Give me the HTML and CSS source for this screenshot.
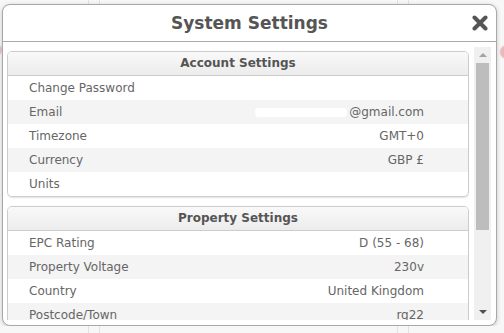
FILE: index.html
```html
<!DOCTYPE html>
<html>
<head>
    <meta charset="UTF-8">
    <title>System Settings</title>
    <link rel="stylesheet" href="styles.css">
</head>
<body>
    <div class="dialog">
        <div class="dialog-head">
            <span></span>
            <h1>System Settings</h1>
            <a class="close" href="#" aria-label="Close">
                <svg width="16" height="16" viewBox="0 0 16 16">
                    <path d="M2.5 2.5 L13.5 13.5 M13.5 2.5 L2.5 13.5" stroke="#555" stroke-width="4" stroke-linecap="round"/>
                </svg>
            </a>
        </div>
        <div class="dialog-body">
            <div class="scroll-area">
                <div class="panel">
                    <div class="panel-head">Account Settings</div>
                    <div class="row"><span>Change Password</span><span></span></div>
                    <div class="row"><span>Email</span><span><span class="redact"></span>@gmail.com</span></div>
                    <div class="row"><span>Timezone</span><span>GMT+0</span></div>
                    <div class="row"><span>Currency</span><span>GBP £</span></div>
                    <div class="row"><span>Units</span><span></span></div>
                </div>
                <div class="panel">
                    <div class="panel-head">Property Settings</div>
                    <div class="row"><span>EPC Rating</span><span>D (55 - 68)</span></div>
                    <div class="row"><span>Property Voltage</span><span>230v</span></div>
                    <div class="row"><span>Country</span><span>United Kingdom</span></div>
                    <div class="row"><span>Postcode/Town</span><span>rg22</span></div>
                </div>
            </div>
            <div class="scrollbar">
                <div class="sb-btn"><i class="arrow-up"></i></div>
                <div class="sb-thumb"></div>
                <div class="sb-track"></div>
                <div class="sb-btn"><i class="arrow-down"></i></div>
            </div>
        </div>
    </div>
</body>
</html>
```

FILE: styles.css
```css
body {
    margin: 0;
    font-family: 'DejaVu Sans', Verdana, sans-serif;
    background-color: #f7f7f7;
    background-image:
        radial-gradient(circle at 507px 52px, #e9b9bb 0, #e9b9bb 6px, transparent 8px),
        radial-gradient(circle at -4px 50px, #e6c4c6 0, #e6c4c6 5px, transparent 7px),
        linear-gradient(90deg, transparent 88px, #e2e2e2 88px, #e2e2e2 89px, transparent 89px,
            transparent 99px, #e2e2e2 99px, #e2e2e2 100px, transparent 100px,
            transparent 397px, #e2e2e2 397px, #e2e2e2 398px, transparent 398px,
            transparent 408px, #e2e2e2 408px, #e2e2e2 409px, transparent 409px);
}
.dialog {
    width: 493px;
    height: 320px;
    margin: 4px 0 0 2px;
    background: white;
    border: 1px solid #a8a8a8;
    border-radius: 8px;
    box-shadow: 0 1px 4px rgba(0,0,0,0.2);
    overflow: hidden;
}
.dialog-head {
    height: 36px;
    border-bottom: 1px solid #aaa;
    display: grid;
    grid-template-columns: 1fr auto 1fr;
    align-items: center;
}
.dialog-head h1 {
    margin: 0;
    font-size: 17px;
    font-weight: bold;
    color: #555;
}
.close {
    justify-self: end;
    margin-right: 8px;
    display: flex;
}
.dialog-body {
    height: 273px;
    padding: 5px 5px 5px 4px;
    display: flex;
    gap: 5px;
}
.scroll-area {
    flex: 1;
    overflow: hidden;
}
.panel {
    margin-top: 4px;
    margin-bottom: 9px;
    border: 1px solid #ccc;
    border-radius: 5px;
    box-shadow: 0 1px 2px rgba(0,0,0,0.12);
    overflow: hidden;
}
.panel + .panel {
    margin-top: 0;
}
.panel-head {
    height: 23px;
    line-height: 23px;
    text-align: center;
    font-size: 12px;
    font-weight: bold;
    color: #555;
    background: linear-gradient(#f9f9f9, #ececec);
    border-bottom: 1px solid #ccc;
}
.row {
    height: 24px;
    display: flex;
    justify-content: space-between;
    align-items: center;
    padding: 0 44px 0 21px;
    font-size: 12px;
    color: #666;
}
.row:nth-child(odd) {
    background: #f4f4f4;
}
.redact {
    display: inline-block;
    width: 92px;
    height: 9px;
    margin-right: 2px;
    vertical-align: middle;
    background: white;
    border-radius: 4px;
}
.scrollbar {
    width: 17px;
    display: flex;
    flex-direction: column;
    background: #f0f0f0;
}
.sb-btn {
    height: 16px;
    display: flex;
    align-items: center;
    justify-content: center;
}
.sb-thumb {
    height: 167px;
    margin: 0 2px;
    background: #bdbdbd;
}
.sb-track {
    flex: 1;
}
.arrow-up {
    border-left: 4px solid transparent;
    border-right: 4px solid transparent;
    border-bottom: 4px solid #a3a3a3;
}
.arrow-down {
    border-left: 4px solid transparent;
    border-right: 4px solid transparent;
    border-top: 4px solid #505050;
}
```
